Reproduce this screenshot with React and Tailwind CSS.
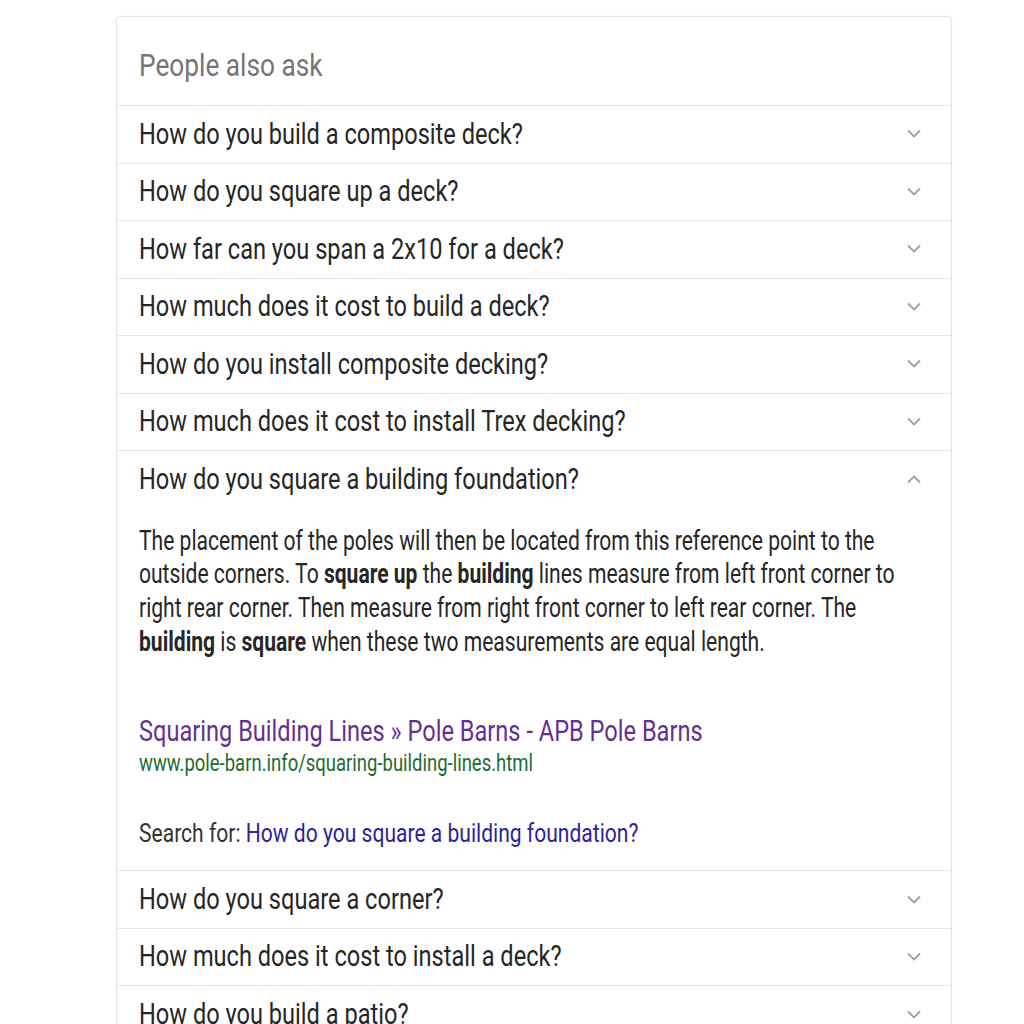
const SX = "inline-block origin-left whitespace-nowrap";

const Chevron = ({ up }) => (
  <svg width="16" height="10" viewBox="0 0 16 10" className="shrink-0">
    <polyline
      points={up ? "2,8.5 8,2.5 14,8.5" : "2,1.5 8,7.5 14,1.5"}
      fill="none"
      stroke="#a0a0a0"
      strokeWidth="1.8"
    />
  </svg>
);

const Row = ({ q, up }) => (
  <div className="flex h-[57.5px] items-center justify-between border-t border-[#e6e6e6] pl-[22px] pr-[29px]">
    <span className={`${SX} scale-x-[0.8] text-[29.5px] leading-none text-[#262626]`}>{q}</span>
    <Chevron up={up} />
  </div>
);

const before = [
  "How do you build a composite deck?",
  "How do you square up a deck?",
  "How far can you span a 2x10 for a deck?",
  "How much does it cost to build a deck?",
  "How do you install composite decking?",
  "How much does it cost to install Trex decking?",
];

const after = [
  "How do you square a corner?",
  "How much does it cost to install a deck?",
  "How do you build a patio?",
];

export default function App() {
  return (
    <div className="h-[1024px] w-[1024px] overflow-hidden bg-white font-['Roboto',sans-serif]">
      <div className="ml-[116px] mt-[16px] w-[836px] rounded-[4px] border border-[#e3e3e3] shadow-[0_0_2px_rgba(0,0,0,0.06)]">
        <div className="flex h-[88px] items-center pl-[22px]">
          <span className={`${SX} scale-x-[0.82] pt-[8px] text-[32px] leading-none text-[#757575]`}>People also ask</span>
        </div>
        {before.map((q) => (
          <Row key={q} q={q} />
        ))}
        <div className="border-t border-[#e6e6e6]">
          <div className="flex h-[56.5px] items-center justify-between pl-[22px] pr-[29px]">
            <span className={`${SX} scale-x-[0.8] text-[29.5px] leading-none text-[#262626]`}>
              How do you square a building foundation?
            </span>
            <Chevron up />
          </div>
          <div className="pl-[22px] pb-[20px] pt-[17px]">
            <div className="text-[27px] leading-[33.7px] text-[#262626]">
              <div className={`${SX} scale-x-[0.78]`}>The placement of the poles will then be located from this reference point to the</div>
              <br />
              <div className={`${SX} scale-x-[0.78]`}>
                outside corners. To <b className="font-bold">square up</b> the <b className="font-bold">building</b> lines measure from left front corner to
              </div>
              <br />
              <div className={`${SX} scale-x-[0.78]`}>right rear corner. Then measure from right front corner to left rear corner. The</div>
              <br />
              <div className={`${SX} scale-x-[0.78]`}>
                <b className="font-bold">building</b> is <b className="font-bold">square</b> when these two measurements are equal length.
              </div>
            </div>
            <div className="mt-[55px] text-[29.5px] leading-[34px] text-[#652f91]">
              <span className={`${SX} scale-x-[0.8]`}>Squaring Building Lines » Pole Barns - APB Pole Barns</span>
            </div>
            <div className="text-[24px] leading-[30px] text-[#1e6b32]">
              <span className={`${SX} scale-x-[0.77]`}>www.pole-barn.info/squaring-building-lines.html</span>
            </div>
            <div className="mt-[38px] text-[26px] leading-[34px] text-[#333333]">
              <span className={`${SX} scale-x-[0.81]`}>
                Search for: <span className="text-[#2b249e]">How do you square a building foundation?</span>
              </span>
            </div>
          </div>
        </div>
        {after.map((q) => (
          <Row key={q} q={q} />
        ))}
      </div>
    </div>
  );
}
